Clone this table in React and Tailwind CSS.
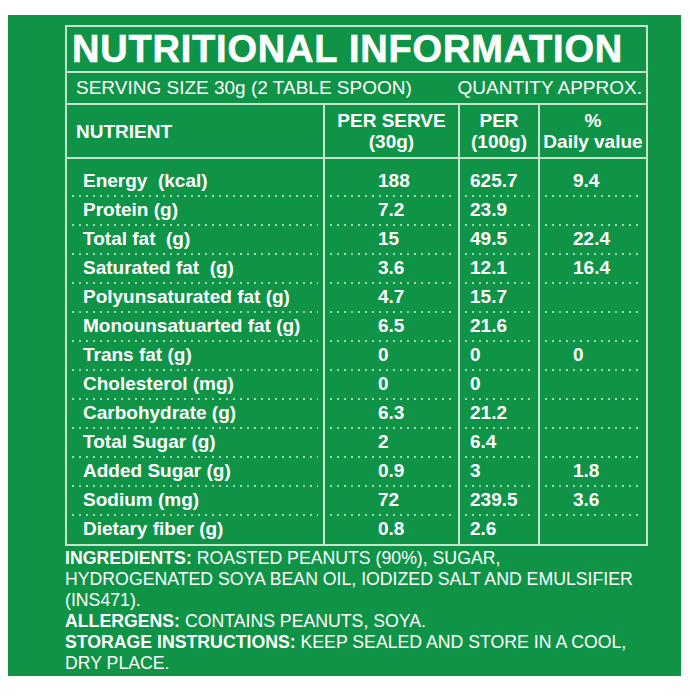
const rows = [
  ["Energy  (kcal)", "188", "625.7", "9.4"],
  ["Protein (g)", "7.2", "23.9", ""],
  ["Total fat  (g)", "15", "49.5", "22.4"],
  ["Saturated fat  (g)", "3.6", "12.1", "16.4"],
  ["Polyunsaturated fat (g)", "4.7", "15.7", ""],
  ["Monounsatuarted fat (g)", "6.5", "21.6", ""],
  ["Trans fat (g)", "0", "0", "0"],
  ["Cholesterol (mg)", "0", "0", ""],
  ["Carbohydrate (g)", "6.3", "21.2", ""],
  ["Total Sugar (g)", "2", "6.4", ""],
  ["Added Sugar (g)", "0.9", "3", "1.8"],
  ["Sodium (mg)", "72", "239.5", "3.6"],
  ["Dietary fiber (g)", "0.8", "2.6", ""],
];

const Dots = () => (
  <div className="mx-[5px] h-[2px] bg-[linear-gradient(to_right,rgba(255,255,255,0.6)_2px,transparent_2px)] bg-[length:7px_2px] bg-repeat-x" />
);

const Cell = ({ children, pad, line, first, top }) => (
  <div className={`flex flex-col ${first ? "" : "border-l-2 border-[#c4e5cc]"} ${top ? "pt-[9px]" : ""}`}>
    <div className={`h-[27px] flex items-center whitespace-pre ${pad}`}>{children}</div>
    {line ? <Dots /> : <div className="h-[1px]" />}
  </div>
);

const App = () => {
  return (
    <div className="w-[690px] h-[700px] bg-white pt-[15px] pl-[8px] font-['Liberation_Sans',Arial,sans-serif] text-white">
      <div className="w-[673px] h-[661px] bg-[#0f9447] pl-[57px] pt-[10px]">
        <div className="w-[583px] border-2 border-[#c4e5cc]">
          {/* Title */}
          <div className="h-[46px] flex items-center pl-[5px] border-b-2 border-[#c4e5cc]">
            <h1 className="text-[38px] leading-none font-bold tracking-[0.8px] [-webkit-text-stroke:0.6px_white]">NUTRITIONAL INFORMATION</h1>
          </div>

          {/* Serving size */}
          <div className="h-[32px] flex items-center justify-between pl-[9px] pr-[4px] border-b-2 border-[#c4e5cc] text-[19px]">
            <span>SERVING SIZE 30g (2 TABLE SPOON)</span>
            <span>QUANTITY APPROX.</span>
          </div>

          {/* Header */}
          <div className="grid grid-cols-[256px_135px_80px_108px] h-[54px] border-b-2 border-[#c4e5cc] text-[19px] font-bold leading-[21px]">
            <div className="flex items-center pl-[9px]">NUTRIENT</div>
            <div className="flex flex-col items-center justify-center border-l-2 border-[#c4e5cc] text-center">
              <span>PER SERVE</span>
              <span>(30g)</span>
            </div>
            <div className="flex flex-col items-center justify-center border-l-2 border-[#c4e5cc] text-center">
              <span>PER</span>
              <span>(100g)</span>
            </div>
            <div className="flex flex-col items-center justify-center border-l-2 border-[#c4e5cc] text-center">
              <span>%</span>
              <span>Daily value</span>
            </div>
          </div>

          {/* Rows */}
          <div className="text-[19px] font-bold">
            {rows.map((r, i) => {
              const line = i < rows.length - 1;
              const top = i === 0;
              return (
                <div key={i} className="grid grid-cols-[256px_135px_80px_108px]">
                  <Cell first line={line} top={top} pad="pl-[16px]">{r[0]}</Cell>
                  <Cell line={line} top={top} pad="pl-[53px]">{r[1]}</Cell>
                  <Cell line={line} top={top} pad="pl-[10px]">{r[2]}</Cell>
                  <Cell line={line} top={top} pad="pl-[33px]">{r[3]}</Cell>
                </div>
              );
            })}
          </div>
        </div>

        {/* Ingredients */}
        <div className="pt-[2px] text-[17.7px] leading-[21px] uppercase">
          <p>
            <b>INGREDIENTS:</b> ROASTED PEANUTS (90%), SUGAR,
            <br />
            HYDROGENATED SOYA BEAN OIL, IODIZED SALT AND EMULSIFIER
            <br />
            (INS471).
          </p>
          <p>
            <b>ALLERGENS:</b> CONTAINS PEANUTS, SOYA.
          </p>
          <p>
            <b>STORAGE INSTRUCTIONS:</b> KEEP SEALED AND STORE IN A COOL,
            <br />
            DRY PLACE.
          </p>
        </div>
      </div>
    </div>
  );
};

export default App;
